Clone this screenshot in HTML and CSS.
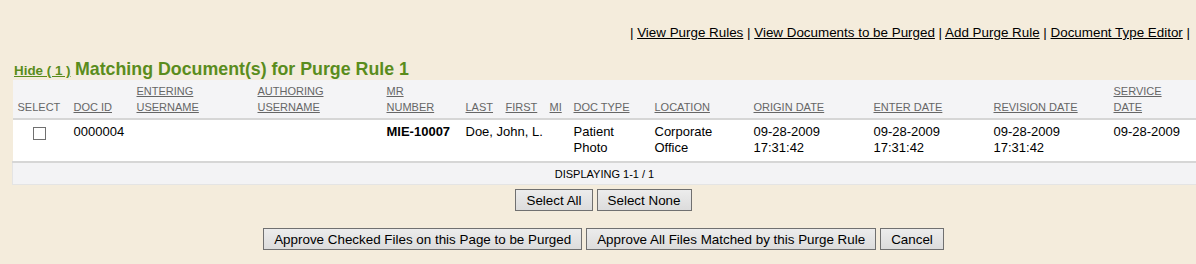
FILE: index.html
```html
<!DOCTYPE html>
<html lang="en">
<head>
  <meta charset="UTF-8">
  <title>Purge Documents</title>
  <link rel="stylesheet" href="styles.css">
</head>
<body>

  <div class="topnav">
    | <a href="#">View Purge Rules</a> | <a href="#">View Documents to be Purged</a> | <a href="#">Add Purge Rule</a> | <a href="#">Document Type Editor</a> |
  </div>

  <div class="section">
    <div class="section-title">
      <a href="#" class="hide-link">Hide ( 1 )</a>
      <span class="title">Matching Document(s) for Purge Rule 1</span>
    </div>

    <table class="docs">
      <colgroup>
        <col style="width:56px">
        <col style="width:63px">
        <col style="width:121px">
        <col style="width:129px">
        <col style="width:79px">
        <col style="width:40px">
        <col style="width:44px">
        <col style="width:24px">
        <col style="width:81px">
        <col style="width:99px">
        <col style="width:120px">
        <col style="width:120px">
        <col style="width:120px">
        <col>
      </colgroup>
      <thead>
        <tr>
          <th>SELECT</th>
          <th><a href="#">DOC ID</a></th>
          <th><a href="#">ENTERING<br>USERNAME</a></th>
          <th><a href="#">AUTHORING<br>USERNAME</a></th>
          <th><a href="#">MR<br>NUMBER</a></th>
          <th><a href="#">LAST</a></th>
          <th><a href="#">FIRST</a></th>
          <th><a href="#">MI</a></th>
          <th><a href="#">DOC TYPE</a></th>
          <th><a href="#">LOCATION</a></th>
          <th><a href="#">ORIGIN DATE</a></th>
          <th><a href="#">ENTER DATE</a></th>
          <th><a href="#">REVISION DATE</a></th>
          <th><a href="#">SERVICE<br>DATE</a></th>
        </tr>
      </thead>
      <tbody>
        <tr>
          <td class="check"><span class="box"></span></td>
          <td>0000004</td>
          <td></td>
          <td></td>
          <td class="mr">MIE-10007</td>
          <td colspan="3">Doe, John, L.</td>
          <td>Patient<br>Photo</td>
          <td>Corporate<br>Office</td>
          <td>09-28-2009<br>17:31:42</td>
          <td>09-28-2009<br>17:31:42</td>
          <td>09-28-2009<br>17:31:42</td>
          <td>09-28-2009</td>
        </tr>
      </tbody>
      <tfoot>
        <tr>
          <td colspan="14">DISPLAYING 1-1 / 1</td>
        </tr>
      </tfoot>
    </table>
  </div>

  <div class="buttons first">
    <button>Select All</button>
    <button>Select None</button>
  </div>
  <div class="buttons second">
    <button>Approve Checked Files on this Page to be Purged</button>
    <button>Approve All Files Matched by this Purge Rule</button>
    <button>Cancel</button>
  </div>

</body>
</html>
```

FILE: styles.css
```css
body {
  margin: 0;
  background-color: #f4ecdc;
  font-family: 'Liberation Sans', Arial, sans-serif;
  color: #000;
}

.topnav {
  padding: 25px 6px 0 0;
  text-align: right;
  font-size: 13.4px;
  line-height: 16px;
}

.topnav a {
  color: #000;
}

.section {
  padding-left: 12px;
}

.section-title {
  margin-top: 18px;
  height: 21px;
  line-height: 21px;
}

.hide-link {
  color: #5a8c1c;
  font-size: 13.4px;
  font-weight: bold;
  margin-left: 2px;
}

.title {
  color: #5a8c1c;
  font-size: 17.8px;
  font-weight: bold;
}

.docs {
  width: 1184px;
  table-layout: fixed;
  border-collapse: collapse;
  font-size: 13px;
}

.docs th {
  background: #f4f4f6;
  color: #666;
  font-size: 11px;
  font-weight: normal;
  text-align: left;
  vertical-align: bottom;
  line-height: 16px;
  padding: 3px 0 3px 5px;
  border-bottom: 2px solid #d6d6d6;
  white-space: nowrap;
}

.docs th a {
  color: #666;
}

.docs tbody td {
  background: #fff;
  vertical-align: top;
  line-height: 16px;
  padding: 4px 0 5px 5px;
  border-bottom: 2px solid #d6d6d6;
  white-space: nowrap;
}

.docs td.check {
  text-align: center;
  padding-left: 0;
}

.box {
  display: inline-block;
  width: 11px;
  height: 11px;
  border: 1px solid #707070;
  background: #fff;
  margin: 3px 2px 0 0;
}

.docs td.mr {
  font-weight: bold;
}

.docs tfoot td {
  background: #f3f3f5;
  font-size: 11px;
  text-align: center;
  height: 21px;
  padding: 0;
  border-left: 1px solid #e4e4e4;
  border-bottom: 1px solid #e4e4e4;
}

.buttons {
  display: flex;
  justify-content: center;
  gap: 4px;
  padding-left: 11px;
}

.buttons.first {
  margin-top: 4px;
}

.buttons.second {
  margin-top: 17px;
}

button {
  font-family: 'Liberation Sans', Arial, sans-serif;
  font-size: 13.4px;
  height: 22px;
  padding: 0 10px;
  border: 1px solid #707070;
  background: linear-gradient(#ececec, #dcdcdc);
  color: #000;
}
```
